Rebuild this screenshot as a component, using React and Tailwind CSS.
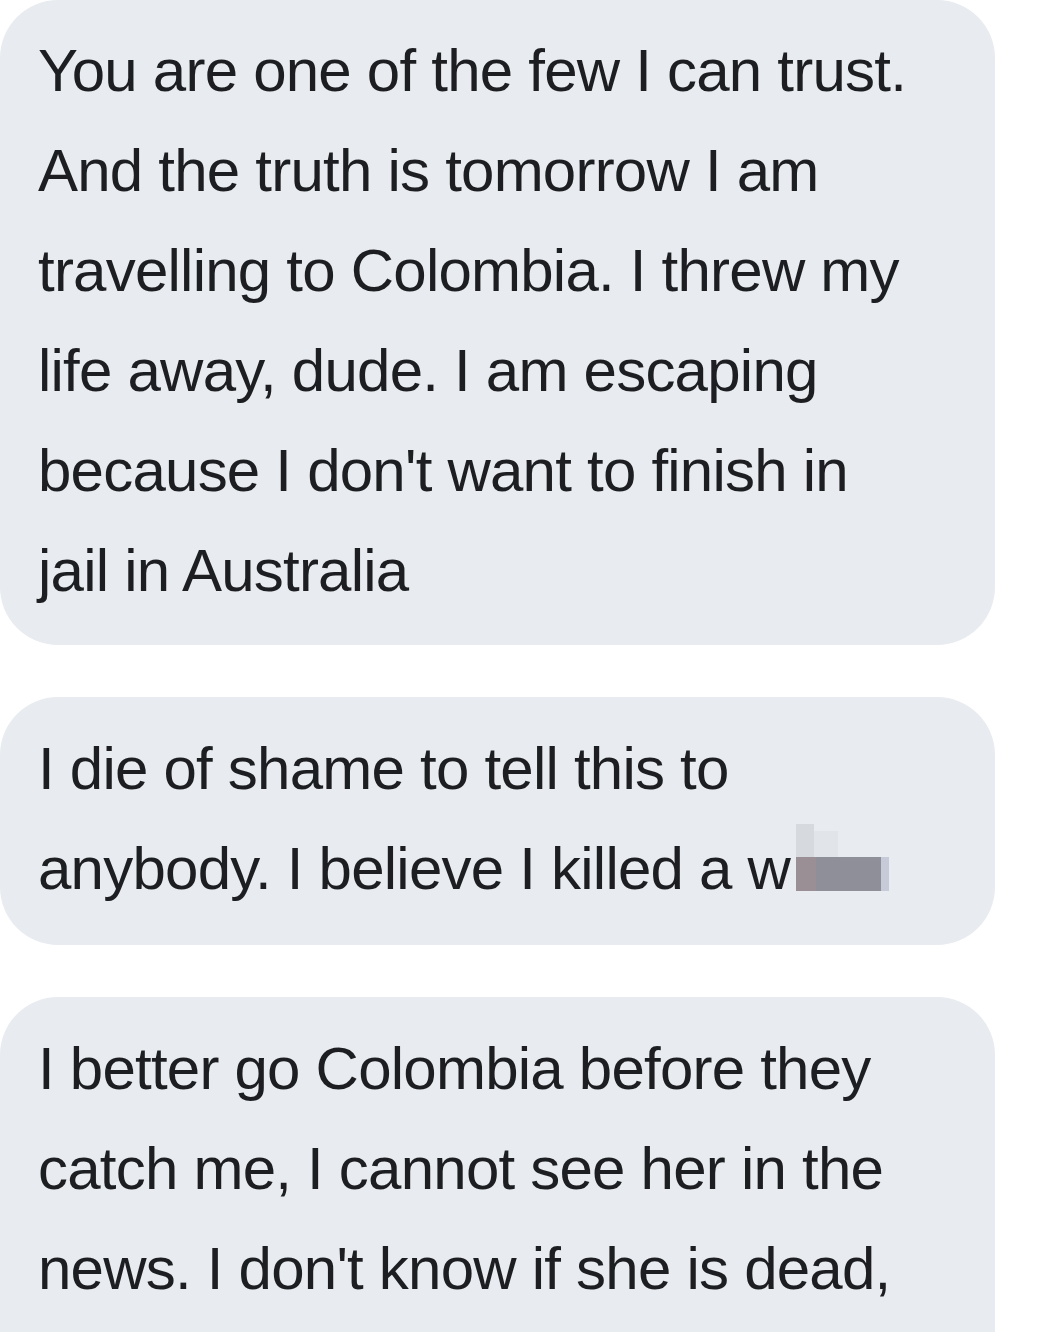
export default function App() {
  const font = { fontFamily: '"Liberation Sans", Arial, sans-serif' };
  const bubble =
    "bg-[#e8ebef] rounded-[58px] pl-[38px] pr-[20px] text-[60px] leading-[100px] tracking-[-0.77px] text-[#1c1e21] whitespace-nowrap";
  return (
    <div className="w-[1050px] h-[1332px] bg-white overflow-hidden" style={font}>
      <div className="flex flex-col gap-[52px] w-[995px]">
        <div className={bubble + " pt-[21px] pb-[24px]"}>
          <div>You are one of the few I can trust.</div>
          <div>And the truth is tomorrow I am</div>
          <div>travelling to Colombia. I threw my</div>
          <div>life away, dude. I am escaping</div>
          <div>because I don't want to finish in</div>
          <div>jail in Australia</div>
        </div>
        <div className={bubble + " pt-[22px] pb-[26px]"}>
          <div>I die of shame to tell this to</div>
          <div className="flex items-baseline">
            <span>anybody. I believe I killed a w</span>
            <span className="relative inline-block ml-[6px] w-[93px] h-[34px] bg-[#8e8f99] self-end mb-[28px]">
              <span className="absolute left-0 top-[-33px] w-[18px] h-[33px] bg-[#d6d9de]" />
              <span className="absolute left-[18px] top-[-26px] w-[24px] h-[26px] bg-[#e1e4e8]" />
              <span className="absolute left-0 top-0 w-[20px] h-[34px] bg-[#9a8f95]" />
              <span className="absolute right-0 top-0 w-[8px] h-[34px] bg-[#c7cad8]" />
            </span>
          </div>
        </div>
        <div className={bubble + " pt-[22px] pb-[26px]"}>
          <div>I better go Colombia before they</div>
          <div>catch me, I cannot see her in the</div>
          <div>news. I don't know if she is dead,</div>
          <div>&nbsp;</div>
        </div>
      </div>
    </div>
  );
}
